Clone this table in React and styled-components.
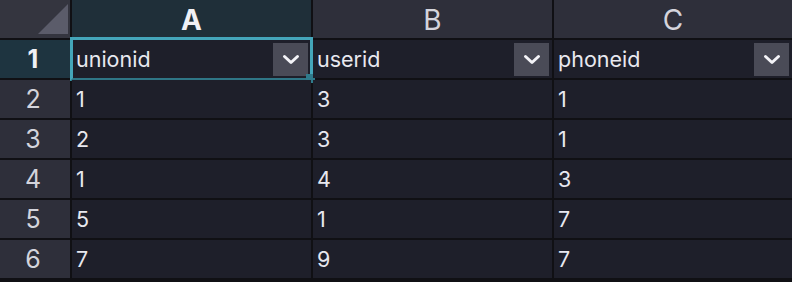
import React from "react";
import styled, { createGlobalStyle } from "styled-components";

const Global = createGlobalStyle`
  html, body { margin: 0; padding: 0; background: #101014; }
  body { font-family: Inter, Roboto, "Liberation Sans", sans-serif; }
`;

const Grid = styled.div`
  display: grid;
  grid-template-columns: 70px 239px 239px 1fr;
  grid-auto-rows: 38px;
  gap: 2px;
  width: 792px;
  height: 282px;
  background: #101014;
  overflow: hidden;
`;

const Corner = styled.div`
  position: relative;
  background: #34353f;
  &::after {
    content: "";
    position: absolute;
    right: 2px;
    bottom: 4px;
    width: 0;
    height: 0;
    border-left: 30px solid transparent;
    border-bottom: 30px solid #5b5c6a;
  }
`;

const ColHead = styled.div`
  display: flex;
  align-items: center;
  justify-content: center;
  background: ${(p) => (p.$active ? "#1f2f39" : "#2e2f3a")};
  color: ${(p) => (p.$active ? "#f0f0f5" : "#d4d4dc")};
  font-size: 28px;
  font-weight: ${(p) => (p.$active ? 700 : 400)};
  padding-top: 1px;
`;

const RowHead = styled.div`
  display: flex;
  align-items: center;
  justify-content: center;
  background: ${(p) => (p.$active ? "#1e3440" : "#2e2f3a")};
  color: ${(p) => (p.$active ? "#f0f0f5" : "#d4d4dc")};
  font-size: 25px;
  font-weight: ${(p) => (p.$active ? 700 : 400)};
  padding-right: 4px;
`;

const Cell = styled.div`
  position: relative;
  display: flex;
  align-items: center;
  justify-content: space-between;
  background: #1e1f2a;
  color: #e8e8ef;
  font-size: 21.5px;
  padding: 0 3px 0 4px;
`;

const Selection = styled.div`
  position: absolute;
  left: -2px;
  top: -3px;
  right: -2px;
  bottom: -3px;
  border: 3px solid #44a6ba;
  border-bottom-color: #2f7686;
  pointer-events: none;
  &::after {
    content: "";
    position: absolute;
    right: -5px;
    bottom: -5px;
    width: 9px;
    height: 9px;
    background: #2f7b8c;
  }
`;

const DropButton = styled.div`
  width: 35px;
  height: 33px;
  background: #4a4b57;
  display: flex;
  align-items: center;
  justify-content: center;
`;

const Chevron = () => (
  <svg width="18" height="11" viewBox="0 0 18 11">
    <path d="M2.5 2.5 L9 8.5 L15.5 2.5" fill="none" stroke="#f4f4f8" strokeWidth="3" strokeLinecap="round" strokeLinejoin="round" />
  </svg>
);

const cols = ["A", "B", "C"];
const header = ["unionid", "userid", "phoneid"];
const rows = [
  ["1", "3", "1"],
  ["2", "3", "1"],
  ["1", "4", "3"],
  ["5", "1", "7"],
  ["7", "9", "7"],
];

export default function App() {
  return (
    <>
      <Global />
      <Grid>
        <Corner />
        {cols.map((c, i) => (
          <ColHead key={c} $active={i === 0}>{c}</ColHead>
        ))}
        <RowHead $active>1</RowHead>
        {header.map((h, i) => (
          <Cell key={h}>
            <span>{h}</span>
            <DropButton><Chevron /></DropButton>
            {i === 0 && <Selection />}
          </Cell>
        ))}
        {rows.map((r, ri) => (
          <React.Fragment key={ri}>
            <RowHead>{ri + 2}</RowHead>
            {r.map((v, ci) => (
              <Cell key={ci}><span>{v}</span></Cell>
            ))}
          </React.Fragment>
        ))}
      </Grid>
    </>
  );
}
